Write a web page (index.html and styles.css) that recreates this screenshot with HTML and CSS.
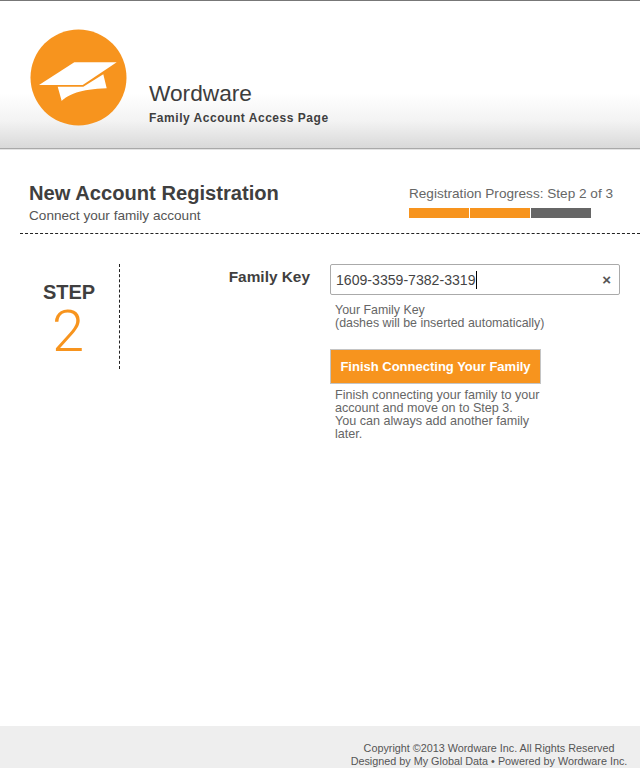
FILE: index.html
```html
<!DOCTYPE html>
<html lang="en">
<head>
    <meta charset="UTF-8">
    <meta name="viewport" content="width=device-width, initial-scale=1.0">
    <title>Wordware - Family Account Access Page</title>
    <link rel="stylesheet" href="styles.css">
</head>
<body>
    <div class="header">
        <svg class="logo" width="98" height="98" viewBox="0 0 98 98">
            <circle cx="48.5" cy="48.5" r="48" fill="#f7941e"/>
            <path d="M44.3 33.3H86.7L52.7 56H9Z" fill="#fff"/>
            <path d="M27.7 57.7L31.7 72C38 66 50 60 76.7 59.3L73.3 45.3L53.3 57.7Z" fill="#fff"/>
        </svg>
        <div class="brand">
            <div class="brand-name">Wordware</div>
            <div class="brand-sub">Family Account Access Page</div>
        </div>
    </div>

    <div class="title-row">
        <div>
            <h1>New Account Registration</h1>
            <div class="subtitle">Connect your family account</div>
        </div>
        <div class="progress">
            <div class="progress-label">Registration Progress: Step 2 of 3</div>
            <div class="progress-bar">
                <span class="seg done"></span>
                <span class="seg done"></span>
                <span class="seg"></span>
            </div>
        </div>
    </div>

    <div class="content">
        <div class="step">
            <div class="step-label">STEP</div>
            <div class="step-num">2</div>
        </div>
        <div class="form-label">Family Key</div>
        <div class="form-fields">
            <div class="key-input">
                <span class="key-value">1609-3359-7382-3319</span>
                <span class="key-clear">&times;</span>
            </div>
            <div class="hint">Your Family Key<br>(dashes will be inserted automatically)</div>
            <button class="finish">Finish Connecting Your Family</button>
            <div class="hint finish-hint">Finish connecting your family to your account and move on to Step 3.<br>You can always add another family later.</div>
        </div>
    </div>

    <div class="footer">
        <div>Copyright &copy;2013 Wordware Inc. All Rights Reserved</div>
        <div>Designed by My Global Data &bull; Powered by Wordware Inc.</div>
    </div>
</body>
</html>
```

FILE: styles.css
```css
html, body {
    height: 100%;
}
body {
    margin: 0;
    font-family: "Liberation Sans", Arial, sans-serif;
    color: #3f3f3f;
    background: #fff;
    display: flex;
    flex-direction: column;
    min-height: 768px;
    box-sizing: border-box;
}
.header {
    height: 147px;
    box-sizing: content-box;
    border-top: 1px solid #777;
    border-bottom: 1px solid #a9a9a9;
    box-shadow: 0 1px 0 #e4e4e4;
    background: linear-gradient(to bottom, #fff 0, #fff 92px, #f3f3f3 120px, #d9d9d9 147px);
    display: flex;
    padding-left: 30px;
}
.logo {
    margin-top: 28px;
    flex: none;
}
.brand {
    margin-left: 21px;
    margin-top: 78px;
}
.brand-name {
    font-size: 22.7px;
    line-height: 28px;
    color: #3d3d3d;
}
.brand-sub {
    font-size: 12px;
    font-weight: bold;
    line-height: 16px;
    margin-top: 3px;
    letter-spacing: 0.53px;
}
.title-row {
    margin-left: 20px;
    padding: 32px 27px 7px 9px;
    border-bottom: 1px dashed #222;
    display: flex;
    justify-content: space-between;
}
h1 {
    margin: 0;
    font-size: 20.15px;
    line-height: 24px;
    font-weight: bold;
    color: #3f3f3f;
}
.subtitle {
    font-size: 13.6px;
    line-height: 20px;
    margin-top: 1px;
    color: #555;
}
.progress {
    padding-top: 4px;
}
.progress-label {
    font-size: 13.6px;
    line-height: 18px;
    color: #666;
}
.progress-bar {
    display: flex;
    gap: 1px;
    margin-top: 5px;
}
.seg {
    width: 60px;
    height: 10px;
    background: #666;
}
.seg.done {
    background: #f7941e;
}
.content {
    flex: 1;
    display: flex;
    align-items: flex-start;
    padding: 30px 20px 0 20px;
}
.step {
    width: 100px;
    height: 105px;
    border-right: 1px dashed #222;
    text-align: center;
    padding-top: 16px;
    box-sizing: border-box;
}
.step-label {
    font-size: 20px;
    font-weight: bold;
    line-height: 24px;
    margin-left: -1px;
}
.step-num {
    font-family: Roboto, sans-serif;
    font-weight: 300;
    font-size: 58px;
    line-height: 54px;
    color: #f7941e;
    margin-left: -3px;
}
.form-label {
    width: 190px;
    text-align: right;
    font-size: 15.4px;
    font-weight: bold;
    line-height: 25px;
    margin-right: 20px;
}
.form-fields {
    width: 290px;
}
.key-input {
    height: 31px;
    box-sizing: border-box;
    border: 1px solid #aaa;
    border-radius: 2px;
    display: flex;
    align-items: center;
    justify-content: space-between;
    padding: 0 8px 0 5px;
    font-size: 14.1px;
    color: #444;
}
.key-value {
    border-right: 1px solid #000;
    line-height: 18px;
}
.key-clear {
    font-size: 15px;
    font-weight: bold;
    color: #555;
}
.hint {
    font-size: 12.4px;
    line-height: 13px;
    color: #666;
    margin-left: 5px;
    width: 215px;
}
.key-input + .hint {
    margin-top: 9px;
    width: 280px;
}
.finish {
    display: block;
    width: 211px;
    height: 35px;
    margin-top: 19px;
    padding: 0;
    background: #f7941e;
    border: 1px solid #c4c4c4;
    color: #fff;
    font-family: inherit;
    font-size: 13px;
    font-weight: bold;
}
.finish-hint {
    margin-top: 5px;
    font-size: 12.6px;
}
.footer {
    height: 42px;
    background: #eee;
    box-sizing: border-box;
    padding: 16px 0 0 338px;
    width: 100%;
    font-size: 10.8px;
    line-height: 13px;
    color: #555;
    text-align: center;
    white-space: nowrap;
}
```
